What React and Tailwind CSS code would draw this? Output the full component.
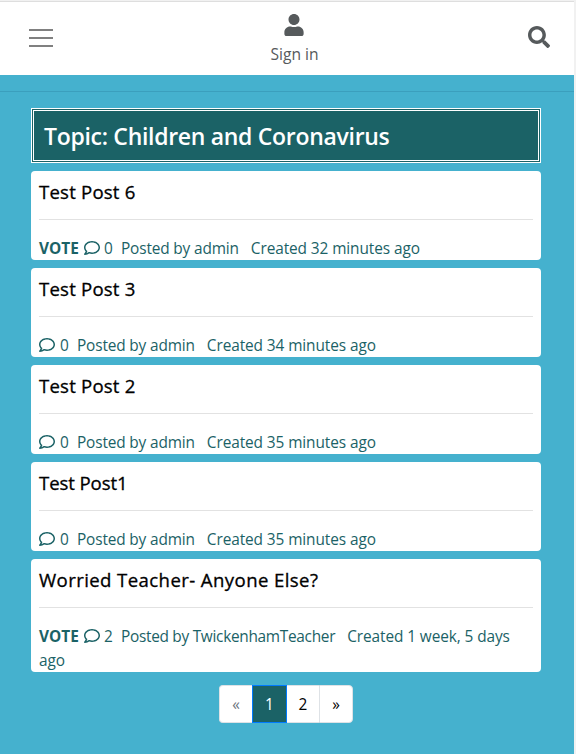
import { FaUser, FaSearch, FaRegComment } from "react-icons/fa";

const posts = [
  { title: "Test Post 6", titleCls: "tracking-[0.2px]", vote: true, comments: 0, author: "admin", authorCls: "tracking-[-0.15px]", created: "Created 32 minutes" },
  { title: "Test Post 3", titleCls: "tracking-[0.2px]", comments: 0, author: "admin", authorCls: "tracking-[-0.15px]", created: "Created 34 minutes" },
  { title: "Test Post 2", titleCls: "tracking-[0.2px]", comments: 0, author: "admin", authorCls: "tracking-[-0.15px]", created: "Created 35 minutes" },
  { title: "Test Post1", titleCls: "tracking-[-0.1px]", comments: 0, author: "admin", authorCls: "tracking-[-0.15px]", created: "Created 35 minutes" },
  { title: "Worried Teacher- Anyone Else?", titleCls: "tracking-[0.4px]", vote: true, comments: 2, author: "TwickenhamTeacher", authorCls: "tracking-[-0.29px]", created: "Created 1 week, 5 days" },
];

function Post({ post }) {
  return (
    <article className="rounded-[4px] bg-white px-2">
      <h2 className={`h-12 pt-[9px] text-[18.6px] leading-6 font-medium text-black [-webkit-text-stroke:0.3px_black] ${post.titleCls}`}>{post.title}</h2>
      <hr className="border-t border-[#e2e2e2]" />
      <p className="-mb-px pt-[17px] text-[15.4px] leading-6 tracking-[-0.09px] text-[#1b6266]">
        {post.vote && <b className="mr-[5px] inline-block w-10 tracking-[0px]">VOTE</b>}
        <FaRegComment className={`inline-block size-4 align-[-2px] ${post.vote ? "mr-1" : "mr-[5px]"}`} />
        <span className="mr-2 inline-block w-[9px]">{post.comments}</span>
        <span className={`mr-3 ${post.authorCls}`}>Posted by {post.author}</span>
        <span>{post.created}</span> <span>ago</span>
      </p>
    </article>
  );
}

export default function App() {
  return (
    <div className="flex h-[754px] w-[576px] flex-col overflow-hidden bg-[#f1f1f1] pr-0.5 font-['Open_Sans','Noto_Sans',sans-serif]">
      <div className="h-0.5 shrink-0 border-b border-[#dedede]" />
      <header className="flex h-[73px] shrink-0 items-start justify-between bg-white pr-6 pl-[29px] text-[#565a5c]">
        <button aria-label="Menu" className="mt-[27px] flex w-6 flex-col gap-1.5">
          <span className="h-0.5 bg-[#808080]" />
          <span className="h-0.5 bg-[#808080]" />
          <span className="h-0.5 bg-[#808080]" />
        </button>
        <a className="mt-[12px] ml-[8px] flex flex-col items-center">
          <FaUser className="size-[22px]" />
          <span className="mt-[6px] text-[15.6px] leading-6">Sign in</span>
        </a>
        <FaSearch className="mt-6 size-[22px]" />
      </header>
      <main className="min-h-0 flex-1 bg-[#45b1ce] pt-4">
        <hr className="border-t border-[#3b9fbd]" />
        <div className="mt-4 mr-[33px] ml-[31px] flex flex-col gap-2">
          <h1 className="flex h-[55px] items-center border-[3px] border-double border-white bg-[#1b6266] pt-0.5 pl-[10px] text-[23px] font-semibold tracking-[-0.3px] text-white">
            Topic: Children and Coronavirus
          </h1>
          {posts.map((post) => (
            <Post key={post.title} post={post} />
          ))}
        </div>
        <nav className="mt-[13px] ml-[219px] flex h-[38px] w-[134px] text-[15.4px] leading-[38px] text-black">
          <a className="w-[33px] rounded-l-[4px] border border-r-0 border-[#dee2e6] bg-white text-center text-[#6c757d]">«</a>
          <a className="w-[35px] border border-[#007bff] bg-[#1b6266] text-center text-white">1</a>
          <a className="w-[32px] border-y border-[#dee2e6] bg-white text-center">2</a>
          <a className="flex-1 rounded-r-[4px] border border-[#dee2e6] bg-white text-center">»</a>
        </nav>
      </main>
    </div>
  );
}
